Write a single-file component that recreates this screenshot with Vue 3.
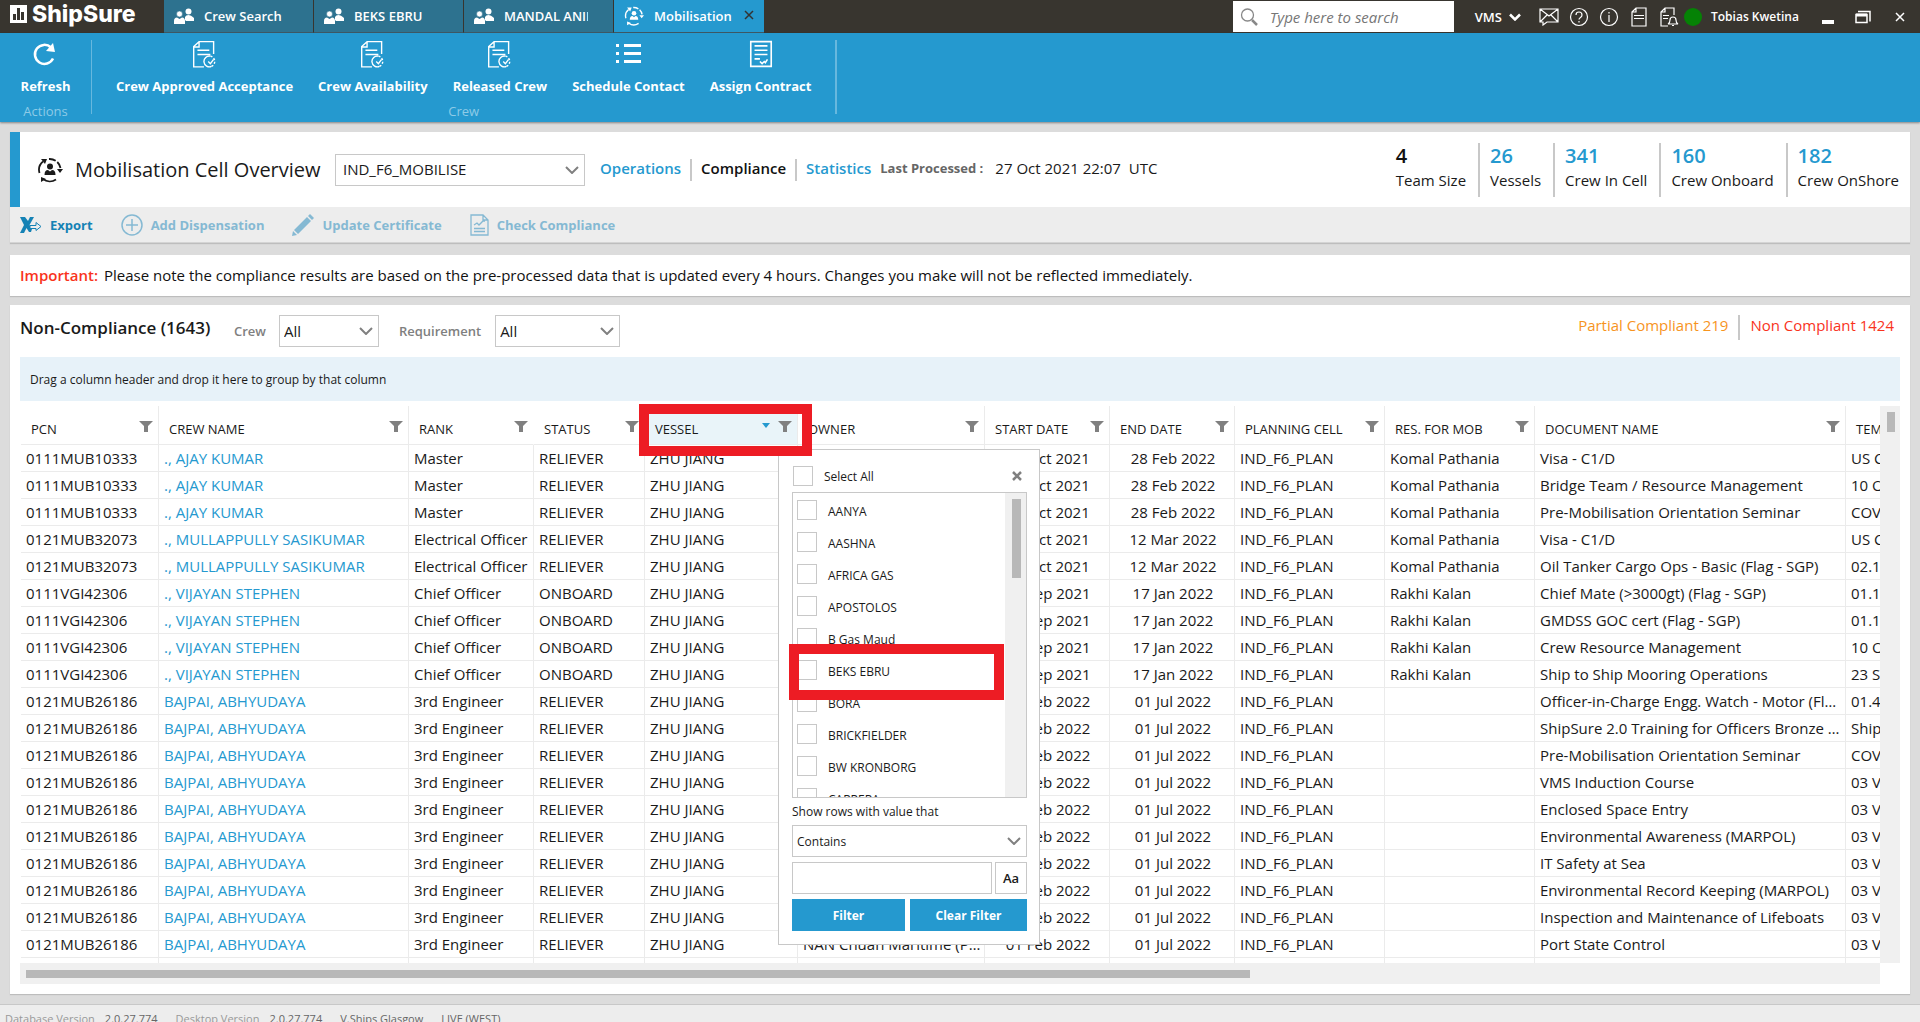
<script setup>
import { ref } from 'vue'

const openTabs = [
  { label: 'Crew Search', icon: 'people' },
  { label: 'BEKS EBRU', icon: 'people' },
  { label: 'MANDAL ANIL', icon: 'people' },
  { label: 'Mobilisation', icon: 'mobilise', active: true },
]

const crewActions = [
  { label: 'Crew Approved Acceptance', icon: 'doc-check' },
  { label: 'Crew Availability', icon: 'doc-check' },
  { label: 'Released Crew', icon: 'doc-check' },
  { label: 'Schedule Contact', icon: 'list' },
  { label: 'Assign Contract', icon: 'contract' },
]

const stats = [
  { value: '4', label: 'Team Size', plain: true },
  { value: '26', label: 'Vessels' },
  { value: '341', label: 'Crew In Cell' },
  { value: '160', label: 'Crew Onboard' },
  { value: '182', label: 'Crew OnShore' },
]

const columns = [
  { key: 'pcn', label: 'PCN' },
  { key: 'name', label: 'CREW NAME' },
  { key: 'rank', label: 'RANK' },
  { key: 'status', label: 'STATUS' },
  { key: 'vessel', label: 'VESSEL', sorted: true },
  { key: 'owner', label: 'OWNER' },
  { key: 'start', label: 'START DATE' },
  { key: 'end', label: 'END DATE' },
  { key: 'cell', label: 'PLANNING CELL' },
  { key: 'res', label: 'RES. FOR MOB' },
  { key: 'doc', label: 'DOCUMENT NAME' },
  { key: 'template', label: 'TEMPLATE' },
]

const crew = {
  ajay: { pcn: '0111MUB10333', name: '., AJAY KUMAR', rank: 'Master', status: 'RELIEVER', start: '28 Oct 2021', end: '28 Feb 2022', res: 'Komal Pathania' },
  sasi: { pcn: '0121MUB32073', name: '., MULLAPPULLY SASIKUMAR', rank: 'Electrical Officer', status: 'RELIEVER', start: '12 Oct 2021', end: '12 Mar 2022', res: 'Komal Pathania' },
  vijay: { pcn: '0111VGI42306', name: '., VIJAYAN STEPHEN', rank: 'Chief Officer', status: 'ONBOARD', start: '17 Sep 2021', end: '17 Jan 2022', res: 'Rakhi Kalan' },
  bajpai: { pcn: '0121MUB26186', name: 'BAJPAI, ABHYUDAYA', rank: '3rd Engineer', status: 'RELIEVER', start: '01 Feb 2022', end: '01 Jul 2022', res: '' },
}

const rows = [
  ['ajay', 'Visa - C1/D', 'US C1/D'],
  ['ajay', 'Bridge Team / Resource Management', '10 Officers'],
  ['ajay', 'Pre-Mobilisation Orientation Seminar', 'COVID'],
  ['sasi', 'Visa - C1/D', 'US C1/D'],
  ['sasi', 'Oil Tanker Cargo Ops - Basic (Flag - SGP)', '02.1 Flag'],
  ['vijay', 'Chief Mate (>3000gt) (Flag - SGP)', '01.1 Flag'],
  ['vijay', 'GMDSS GOC cert (Flag - SGP)', '01.1 Flag'],
  ['vijay', 'Crew Resource Management', '10 Officers'],
  ['vijay', 'Ship to Ship Mooring Operations', '23 STS'],
  ['bajpai', 'Officer-in-Charge Engg. Watch - Motor (Flag - SGP)', '01.4 Flag'],
  ['bajpai', 'ShipSure 2.0 Training for Officers Bronze Level', 'ShipSure'],
  ['bajpai', 'Pre-Mobilisation Orientation Seminar', 'COVID'],
  ['bajpai', 'VMS Induction Course', '03 VMS'],
  ['bajpai', 'Enclosed Space Entry', '03 VMS'],
  ['bajpai', 'Environmental Awareness (MARPOL)', '03 VMS'],
  ['bajpai', 'IT Safety at Sea', '03 VMS'],
  ['bajpai', 'Environmental Record Keeping (MARPOL)', '03 VMS'],
  ['bajpai', 'Inspection and Maintenance of Lifeboats', '03 VMS'],
  ['bajpai', 'Port State Control', '03 VMS'],
].map(([who, doc, template]) => ({
  ...crew[who],
  vessel: 'ZHU JIANG',
  owner: 'NAN Chuan Maritime (Pte) Limited',
  cell: 'IND_F6_PLAN',
  doc,
  template,
}))

const vessels = ['AANYA', 'AASHNA', 'AFRICA GAS', 'APOSTOLOS', 'B Gas Maud', 'BEKS EBRU', 'BORA', 'BRICKFIELDER', 'BW KRONBORG', 'CARRERA']
const chosen = ref([])
const filterText = ref('')
</script>

<template>
  <svg class="sprite" aria-hidden="true">
    <symbol id="people" viewBox="0 0 20 16">
      <g fill="#fff">
        <circle cx="14.500" cy="3.500" r="3" />
        <path d="M11 12V9q1-2 3.500-2T20 10v3h-8z" />
        <circle cx="5.500" cy="6" r="3" stroke="#2d728f" stroke-width="0.600" />
        <path d="M0 16v-3q0-3.500 3-3.500l2.500 1.500L8 9.500q3 0 3 3.500v3z" />
      </g>
    </symbol>
    <symbol id="mobilise" viewBox="0 0 26 26">
      <g fill="none" stroke="currentColor" stroke-width="1.800">
        <path d="M6 4.500A11 11 0 0 0 2.500 16" />
        <path d="M12 2A11 11 0 0 1 23.500 11" stroke-dasharray="7 2 20" />
        <path d="M6 22A11 11 0 0 0 19 22.500" />
      </g>
      <g fill="currentColor">
        <path d="M4 2h6l-2 5zM20 12h6l-3 4zM4 25l0-5 5 2z" />
        <circle cx="13" cy="9.500" r="3" />
        <path d="M7.500 18q0-5 3.500-5l2 1.500 2-1.500q3.500 0 3.500 5z" />
      </g>
    </symbol>
    <symbol id="doc-check" viewBox="0 0 24 26">
      <g fill="none" stroke="#fff" stroke-width="1.300">
        <path d="M11 25H1.500V6L6.500 1.500H20V13M1.500 6.500h5v-5" />
        <path d="M5 9.500h11M5 13.500h12" />
        <path d="M17 15a5 5 0 1 0 1 9.500" />
        <path d="M17 15a5 5 0 0 1 1 9.500" stroke-dasharray="2 1.500" />
        <path d="M15 20l2 2 3-4" />
      </g>
    </symbol>
    <symbol id="list" viewBox="0 0 26 26">
      <path fill="#fff" d="M1 3h3v3H1zM9 3h17v3H9zM1 11h3v3H1zM9 11h17v3H9zM1 19h3v3H1zM9 19h17v3H9z" />
    </symbol>
    <symbol id="contract" viewBox="0 0 24 26">
      <g fill="none" stroke="#fff" stroke-width="1.500">
        <path d="M2.500 1.500h19v23h-19zM6 5.500h12M6 9.500h12M6 13.500h12M6 17.500h5" />
        <path d="M11 20l2 2 2-2 1 1 2-3" />
      </g>
    </symbol>
    <symbol id="funnel" viewBox="0 0 14 12">
      <path fill="#808080" d="M0 0h14L9 5v6H5V5z" />
    </symbol>
    <symbol id="chevron" viewBox="0 0 14 8">
      <path fill="none" stroke="#808080" stroke-width="2" d="M1 1l6 6 6-6" />
    </symbol>
  </svg>

  <div class="app">
    <header class="titlebar">
      <div class="brand">
        <svg width="17" height="18" viewBox="0 0 17 18">
          <path fill="#fff" d="M0 0h17v18H0z" />
          <path fill="#38352f" d="M3 9h3v6H3zM7 3h3v12H7zM11 7h3v8h-3z" />
        </svg>
        <span>ShipSure</span>
      </div>
      <nav class="tabs">
        <button v-for="t in openTabs" :key="t.label" :class="['tab', { active: t.active }]">
          <svg :class="t.icon"><use :href="'#' + t.icon" /></svg>
          <span>{{ t.label }}</span>
          <svg v-if="t.active" class="tab-close" viewBox="0 0 10 10"><path d="M1 1l8 8M9 1l-8 8" stroke="#333" stroke-width="1.500" /></svg>
        </button>
      </nav>
      <label class="search">
        <svg width="18" height="18" viewBox="0 0 18 18" fill="none" stroke="#888">
          <circle cx="7.500" cy="7" r="6" stroke-width="1.300" /><path d="M12 12l5 5" stroke-width="2.500" />
        </svg>
        <input type="text" placeholder="Type here to search" aria-label="Search" />
      </label>
      <button class="vms">VMS
        <svg width="12" height="8" viewBox="0 0 12 8" fill="none" stroke="#fff" stroke-width="2.500"><path d="M1 1.500l5 5 5-5" /></svg>
      </button>
      <div class="tools">
        <button aria-label="Messages"><svg width="20" height="18" viewBox="0 0 20 18"><path d="M1 1h18v13H8l-4 3v-3H1zM1 1l9 7 9-7M1 14l7-7M19 14l-7-7" /></svg></button>
        <button aria-label="Help"><svg width="20" height="20" viewBox="0 0 20 20"><circle cx="10" cy="10" r="8.500" /><path d="M7 8q0-3 3-3t3 3q0 1.500-1.500 2.500T10 12.500M10 14v1.500" /></svg></button>
        <button aria-label="Information"><svg width="20" height="20" viewBox="0 0 20 20"><circle cx="10" cy="10" r="8.500" /><path d="M10 8v7M10 5v1.500" /></svg></button>
        <button aria-label="Documents"><svg width="20" height="20" viewBox="0 0 20 20"><path d="M3 5l4-4h10v18H3zM3 5h4V1M5 8.500h10M5 11.500h10" /></svg></button>
        <button aria-label="Alerts"><svg width="20" height="20" viewBox="0 0 20 20"><path d="M9 19H2V5l4-4h9v7M2 5h4V1M4 8.500h6M4 11.500h5M9 17q2-1 2-4 0-3 3-3t3 3q0 3 2 4zM13 18.500h2" /></svg></button>
      </div>
      <span class="online"></span>
      <span class="user">Tobias Kwetina</span>
      <div class="window-buttons">
        <button aria-label="Minimise"><svg width="16" height="14"><path fill="#fff" d="M2 10h12v4H2z" /></svg></button>
        <button aria-label="Restore"><svg width="16" height="14" fill="none" stroke="#fff"><path d="M3 1.500h12v10" stroke-width="1.500" /><path d="M1 4.500h11v8H1z" stroke-width="1.500" /><path d="M1 5h11" stroke-width="3" /></svg></button>
        <button class="quit" aria-label="Close"><svg width="10" height="10" fill="none" stroke="#fff"><path d="M1 1l8 8M9 1l-8 8" stroke-width="1.500" /></svg></button>
      </div>
    </header>

    <section class="ribbon">
      <div class="group actions">
        <div class="group-items">
          <button class="ribbon-button">
            <svg viewBox="0 0 26 26"><path d="M21 17.500A9.500 9.500 0 1 1 19 6.500" fill="none" stroke="#fff" stroke-width="2.500" /><path fill="#fff" d="M21 2l2 9-9-1z" /></svg>
            <span>Refresh</span>
          </button>
        </div>
        <small>Actions</small>
      </div>
      <div class="group crew">
        <div class="group-items">
          <button v-for="a in crewActions" :key="a.label" class="ribbon-button">
            <svg><use :href="'#' + a.icon" /></svg>
            <span>{{ a.label }}</span>
          </button>
        </div>
        <small>Crew</small>
      </div>
    </section>

    <main class="content">
      <section class="overview">
        <div class="overview-head">
          <svg class="overview-icon"><use href="#mobilise" /></svg>
          <h1>Mobilisation Cell Overview</h1>
          <span class="select cell-select">
            <select aria-label="Cell"><option>IND_F6_MOBILISE</option></select>
            <svg><use href="#chevron" /></svg>
          </span>
          <nav class="views">
            <a href="#operations">Operations</a>
            <a href="#compliance" class="current">Compliance</a>
            <a href="#statistics">Statistics</a>
          </nav>
          <span class="processed">Last Processed :</span>
          <span class="processed-at">27 Oct 2021 22:07&nbsp; UTC</span>
          <dl class="stats">
            <div v-for="s in stats" :key="s.label">
              <dd :class="{ plain: s.plain }">{{ s.value }}</dd>
              <dt>{{ s.label }}</dt>
            </div>
          </dl>
        </div>
        <div class="toolbar">
          <button class="enabled">
            <svg width="22" height="18" viewBox="0 0 22 18"><path fill="#1582b5" d="M0 1h5l3 4 2-4h4L9.500 9l2.500 4-1 3H9L6.500 12 4 17H0l4-8z" /><path fill="#ededed" stroke="#1582b5" d="M10 9.500h6V6.500l5 4-5 4v-2h-6z" /></svg>
            Export
          </button>
          <button>
            <svg width="22" height="22" viewBox="0 0 22 22" fill="none" stroke="#85b9d3" stroke-width="1.500"><circle cx="11" cy="11" r="10" /><path d="M11 5v12M5 11h12" /></svg>
            Add Dispensation
          </button>
          <button>
            <svg width="22" height="22" viewBox="0 0 22 22" fill="#85b9d3"><path d="M0 22l1-5 4 4zM2 16L15 3l4 4L6 20zM16 2l2-2 4 4-2 2z" /></svg>
            Update Certificate
          </button>
          <button>
            <svg width="19" height="22" viewBox="0 0 19 22" fill="none" stroke="#85b9d3" stroke-width="1.300"><path d="M1 1h12l5 5v15H1zM13 1v5h5M4 17.500h11M4 14.500h11M4 11l3-2 2 2 4-4h2" /></svg>
            Check Compliance
          </button>
        </div>
      </section>

      <p class="notice"><strong>Important:</strong> Please note the compliance results are based on the pre-processed data that is updated every 4 hours. Changes you make will not be reflected immediately.</p>

      <section class="panel">
        <div class="panel-head">
          <h2>Non-Compliance (1643)</h2>
          <label for="crew-filter">Crew</label>
          <span class="select crew-select">
            <select id="crew-filter"><option>All</option></select>
            <svg><use href="#chevron" /></svg>
          </span>
          <label for="requirement-filter">Requirement</label>
          <span class="select requirement-select">
            <select id="requirement-filter"><option>All</option></select>
            <svg><use href="#chevron" /></svg>
          </span>
          <div class="totals">
            <a href="#partial" class="partial">Partial Compliant 219</a>
            <a href="#non" class="non">Non Compliant 1424</a>
          </div>
        </div>
        <div class="group-drop">Drag a column header and drop it here to group by that column</div>

        <div class="grid">
          <div class="viewport">
            <table>
              <colgroup><col v-for="c in columns" :key="c.key" :class="'w-' + c.key" /></colgroup>
              <thead>
                <tr>
                  <th v-for="c in columns" :key="c.key" :class="['h-' + c.key, { sorted: c.sorted }]">
                    <div>
                      <span>{{ c.label }}</span>
                      <svg v-if="c.sorted" class="sort" viewBox="0 0 8 5"><path fill="#2599cf" d="M0 0h8L4 5z" /></svg>
                      <svg class="funnel"><use href="#funnel" /></svg>
                    </div>
                  </th>
                </tr>
              </thead>
              <tbody>
                <tr v-for="(r, i) in rows" :key="i">
                  <td v-for="c in columns" :key="c.key" :class="'c-' + c.key">
                    <a v-if="c.key === 'name'" href="#crew">{{ r.name }}</a>
                    <template v-else>{{ r[c.key] }}</template>
                  </td>
                </tr>
                <tr class="next"><td v-for="c in columns" :key="c.key"></td></tr>
              </tbody>
            </table>
          </div>
          <div class="vbar"><i></i></div>
          <div class="hbar"><i></i></div>

          <form class="popup" @submit.prevent>
            <div class="popup-top">
              <label class="check"><input type="checkbox" /><span>Select All</span></label>
              <button type="button" class="close" aria-label="Close"><svg width="10" height="10" viewBox="0 0 10 10"><path d="M1 1l8 8M9 1l-8 8" stroke="#808080" stroke-width="2.500" /></svg></button>
            </div>
            <div class="vessel-box">
              <div class="vessel-list">
                <label v-for="v in vessels" :key="v" class="check">
                  <input v-model="chosen" type="checkbox" :value="v" /><span>{{ v }}</span>
                </label>
              </div>
              <div class="list-bar"><i></i></div>
            </div>
            <label class="rule" for="rule">Show rows with value that</label>
            <span class="select">
              <select id="rule"><option>Contains</option></select>
              <svg><use href="#chevron" /></svg>
            </span>
            <div class="match">
              <input v-model="filterText" type="text" aria-label="Filter value" />
              <button type="button">Aa</button>
            </div>
            <div class="popup-actions">
              <button class="apply">Filter</button>
              <button type="reset">Clear Filter</button>
            </div>
            <div class="mark mark-item"></div>
          </form>
          <div class="mark mark-header"></div>
        </div>
      </section>
    </main>

    <footer class="statusbar">
      <span>Database Version</span><b>2.0.27.774</b>
      <span>Desktop Version</span><b>2.0.27.774</b>
      <b>V.Ships Glasgow</b><b>LIVE (WEST)</b>
    </footer>
  </div>
</template>

<style>
html, body { height: 100%; overflow: hidden; }
#app { height: 100%; }
</style>

<style scoped>
* { box-sizing: border-box; }
button, input, select { font: inherit; color: inherit; margin: 0; }
button { border: 0; background: none; padding: 0; cursor: pointer; white-space: nowrap; }
a { color: #2599cf; text-decoration: none; }
svg { flex: none; display: block; }
.sprite { position: absolute; width: 0; height: 0; }
.app { height: 100vh; display: flex; flex-direction: column; background: #dcdcdc; color: #1a1a1a; font-family: "Open Sans", "Noto Sans", sans-serif; font-size: 15px; overflow: hidden; }

.titlebar { flex: none; height: 33px; display: flex; align-items: center; background: #38352f; color: #fff; font-size: 13px; font-weight: 600; }
.brand { width: 164px; padding-left: 10px; display: flex; align-items: center; gap: 5px; height: 28px; align-self: flex-start; font-family: Inter, sans-serif; font-size: 23px; font-weight: 800; color: #fff; }
.tabs { display: flex; height: 33px; flex: 1; }
.tab { width: 150px; padding: 0 9px 0 10px; display: flex; align-items: center; border-right: 1px solid #38352f; border-bottom: 1px solid #3f5a66; background: #2d728f; text-align: left; }
.tab.active { background: #2599cf; border-right: 0; }
.tab span { margin: 0 6px 0 10px; width: 84px; overflow: hidden; flex: none; }
.people, .mobilise { width: 20px; height: 20px; }
.tab-close { width: 10px; height: 10px; margin-bottom: 3px; }
.search { display: flex; align-items: center; width: 221px; height: 31px; padding-left: 7px; gap: 12px; background: #fff; }
.search input { width: 170px; border: 0; outline: 0; padding: 0; font-size: 15px; font-weight: 400; font-style: italic; color: #333; }
.search input::placeholder { color: #767676; opacity: 1; }
.vms { display: flex; align-items: center; gap: 7px; margin-left: 21px; }
.tools { display: flex; align-items: center; gap: 10px; margin-left: 18px; }
.tools svg { fill: none; stroke: #fff; stroke-width: 1.2; }
.online { width: 18px; height: 18px; margin: 0 9px 0 5px; border-radius: 50%; background: #058205; }
.user { width: 90px; font-size: 12px; white-space: nowrap; }
.window-buttons { display: flex; align-items: center; gap: 19px; margin: 0 15px 0 19px; }
.quit { margin-left: 5px; }

.ribbon { flex: none; height: 89px; display: flex; padding-top: 7px; background: #2599cf; color: #fff; box-shadow: 0 1px 2px rgba(0, 0, 0, 0.4); font-size: 13px; font-weight: 700; }
.group { height: 74px; display: flex; flex-direction: column; align-items: center; border-right: 1px solid #67b8de; }
.group small { font-size: 13px; line-height: 6px; font-weight: 400; color: #8dcbe7; }
.group-items { display: flex; flex: 1; align-items: flex-start; gap: 25px; }
.actions { width: 92px; }
.crew { padding: 0 24px; border-right-width: 2px; }
.ribbon-button { display: flex; flex-direction: column; align-items: center; gap: 9px; line-height: 18px; }
.ribbon-button svg { width: 26px; height: 28px; }

.content { flex: 1; min-height: 0; padding: 10px; display: flex; flex-direction: column; }
.overview { flex: none; box-shadow: 0 1px 1px #bdbdbd; }
.overview-head { height: 75px; display: flex; align-items: center; padding: 0 11px 0 17px; border-left: 10px solid #2599cf; background: #fff; }
.overview-icon { width: 26px; height: 26px; color: #1a1a1a; }
h1 { margin: 0 0 0 12px; width: 250px; font-size: 20px; line-height: 28px; font-weight: 500; white-space: nowrap; }
.select { position: relative; display: block; flex: none; height: 32px; }
.select select { appearance: none; width: 100%; height: 100%; padding: 0 7px; border: 1px solid #c8c8c8; border-radius: 0; background: #fff; }
.select svg { position: absolute; right: 6px; top: 12px; width: 14px; height: 8px; pointer-events: none; }
.cell-select { width: 250px; margin-left: 10px; font-size: 15px; }
.cell-select select { padding-bottom: 2px; }
.views { display: flex; align-items: center; margin-left: 6px; font-weight: 600; font-size: 15px; }
.views a { padding: 0 9px 4px; line-height: 18px; border-left: 2px solid #c8c8c8; }
.views a:first-child { border: 0; }
.views .current { color: #111; }
.processed { padding-bottom: 3px; font-size: 13px; font-weight: 700; color: #666; white-space: nowrap; }
.processed-at { margin-left: 12px; padding-bottom: 3px; font-size: 15px; white-space: nowrap; }
.stats { display: flex; margin: 0 0 0 auto; }
.stats div { display: flex; flex-direction: column; justify-content: center; height: 54px; padding: 0 12px 5px 10px; border-left: 2px solid #c8c8c8; white-space: nowrap; }
.stats div:first-child { border: 0; }
.stats div:last-child { padding-right: 0; }
.stats dd { margin: 0; font-size: 20px; line-height: 26px; font-weight: 600; color: #2599cf; }
.stats dd.plain { color: #111; }
.stats dt { font-size: 15px; line-height: 22px; }
.toolbar { height: 36px; display: flex; align-items: center; gap: 28px; padding-left: 10px; background: #ededed; border-bottom: 1px solid #d4d4d4; font-size: 13px; font-weight: 700; color: #85b9d3; }
.toolbar button { display: flex; align-items: center; gap: 8px; }
.toolbar .enabled { color: #1582b5; }

.notice { flex: none; margin: 12px 0 9px; padding: 0 10px; height: 41px; line-height: 41px; background: #fff; box-shadow: 0 1px 1px #bdbdbd; font-size: 15px; white-space: nowrap; color: #111; }
.notice strong { font-weight: 600; color: #f9331c; margin-right: 2px; }

.panel { flex: 1; min-height: 0; padding: 0 10px 10px; display: flex; flex-direction: column; background: #fff; box-shadow: 0 1px 1px #bdbdbd; }
.panel-head { flex: none; height: 52px; display: flex; align-items: center; }
h2 { margin: 0; width: 214px; padding-bottom: 8px; font-size: 17px; font-weight: 600; white-space: nowrap; }
.panel-head label { font-size: 13px; font-weight: 600; color: #808080; }
.crew-select { width: 100px; margin: 0 20px 0 13px; font-size: 15px; }
.requirement-select { width: 125px; margin-left: 14px; font-size: 15px; }
.panel-head .select select { padding: 0 4px; }
.totals { display: flex; margin-left: auto; padding: 0 6px 8px 0; line-height: 21px; }
.totals a { padding: 0 0 4px 10px; white-space: nowrap; }
.totals .partial { color: #f7941e; padding-right: 10px; }
.totals .non { color: #f9331c; border-left: 2px solid #c8c8c8; }
.group-drop { flex: none; height: 44px; padding: 2px 10px 0; line-height: 42px; background: #e7f2f9; font-size: 12px; font-weight: 500; }

.grid { position: relative; flex: 1; min-height: 0; margin-top: 5px; display: grid; grid-template-columns: 1fr 20px; grid-template-rows: 1fr 21px; }
.viewport { overflow: hidden; min-width: 0; min-height: 0; padding-left: 1px; }
table { table-layout: fixed; width: 2025px; border-collapse: separate; border-spacing: 0; }
.w-pcn { width: 138px; }
.w-name { width: 250px; }
.w-rank, .w-start, .w-end { width: 125px; }
.w-status { width: 111px; }
.w-vessel { width: 153px; }
.w-owner { width: 187px; }
.w-cell, .w-res { width: 150px; }
.w-doc { width: 311px; }
th { height: 39px; padding: 0; border-right: 1px solid #ebebeb; border-bottom: 1px solid #ebebeb; font-size: 13px; font-weight: 500; text-align: left; }
th.h-rank { border-right-color: transparent; }
th.sorted { background: #e9f4f9; }
th div { display: flex; align-items: flex-end; padding: 8px 5px 0 10px; gap: 8px; white-space: nowrap; }
th span { flex: 1; line-height: 22px; }
.funnel { width: 14px; height: 12px; margin-bottom: 7px; }
.sort { width: 8px; height: 5px; margin-bottom: 12px; }
td { height: 27px; padding: 0 3px 0 5px; border-right: 1px solid #ebebeb; border-bottom: 1px solid #ebebeb; line-height: 26px; font-size: 15px; white-space: nowrap; overflow: hidden; text-overflow: ellipsis; }
.c-start, .c-end { text-align: center; }
.c-template { text-overflow: clip; }
.vbar, .hbar, .list-bar { background: #f0f0f0; }
.vbar i, .hbar i, .list-bar i { display: block; background: #b8b8b8; }
.vbar { padding: 6px 5px 0 7px; }
.vbar i { height: 20px; }
.hbar { padding: 7px 0 0 6px; }
.hbar i { width: 66%; height: 8px; }

.popup { position: absolute; left: 758px; top: 43px; width: 262px; padding: 16px 12px 13px 13px; border: 1px solid #c8c8c8; background: #fff; font-size: 12px; }
.popup-top { display: flex; justify-content: space-between; height: 26px; padding: 0 5px 0 1px; }
.close { height: 20px; }
.check { display: flex; align-items: center; gap: 11px; height: 20px; }
.check input { appearance: none; width: 20px; height: 20px; border: 1px solid #c8c8c8; background: #fff; }
.vessel-box { display: flex; height: 306px; border: 1px solid #c8c8c8; }
.vessel-list { flex: 1; display: flex; flex-direction: column; gap: 12px; padding: 7px 4px 0; overflow: hidden; }
.vessel-list .check { flex: none; }
.vessel-list span { padding-top: 2px; }
.list-bar { width: 21px; padding: 6px 5px 0 7px; }
.list-bar i { height: 79px; }
.rule { display: block; line-height: 27px; }
.popup .select select { padding: 0 4px; }
.match { display: flex; gap: 3px; height: 32px; margin: 5px 0; }
.match input { flex: 1; min-width: 0; border: 1px solid #c8c8c8; padding: 0 4px; }
.match button { width: 32px; border: 1px solid #c8c8c8; font-size: 13px; font-weight: 600; }
.popup-actions { display: flex; gap: 5px; height: 32px; }
.popup-actions button { flex: 1; background: #2599cf; color: #fff; font-weight: 700; }
.popup-actions .apply { flex: 0 0 113px; }
.mark { position: absolute; border: 10px solid #ed1c24; pointer-events: none; }
.mark-item { left: 10px; top: 194px; width: 215px; height: 56px; }
.mark-header { left: 619px; top: -2px; width: 173px; height: 52px; }

.statusbar { flex: none; height: 18px; display: flex; padding: 0 5px; border-top: 1px solid #c8c8c8; background: #ededed; font-size: 11px; line-height: 27px; color: #999; overflow: hidden; white-space: nowrap; }
.statusbar span { margin-right: 10px; }
.statusbar b { margin-right: 18px; font-weight: 400; color: #666; }
</style>
